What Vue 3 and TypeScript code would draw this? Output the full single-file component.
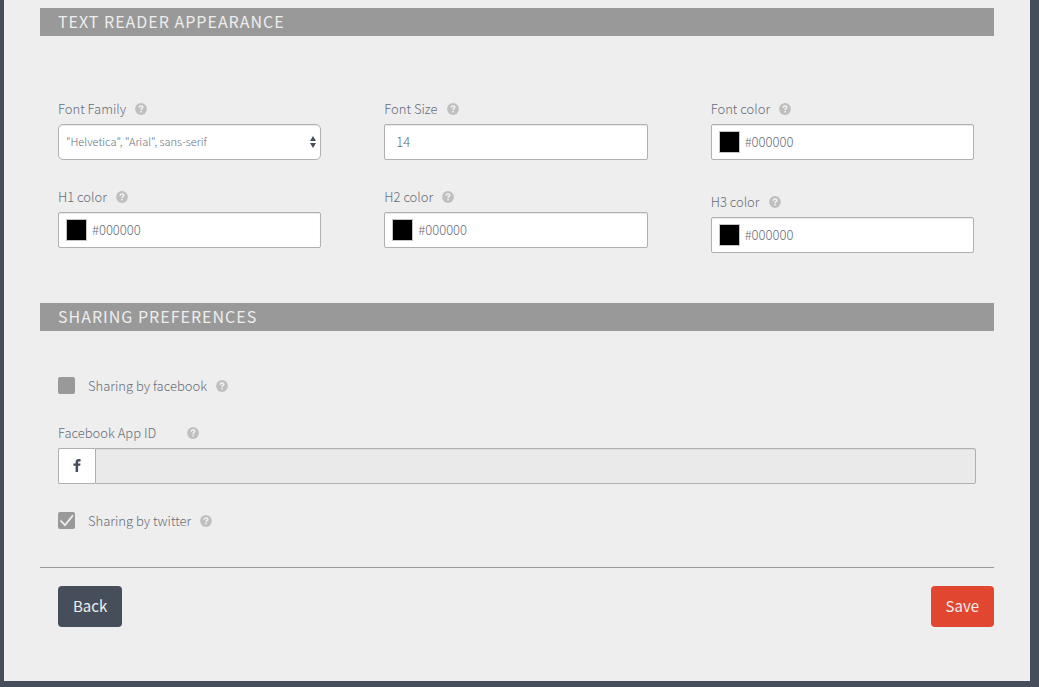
<script setup lang="ts">
import { ref } from 'vue'

type Kind = 'select' | 'number' | 'color'

interface Field {
  id: string
  label: string
  kind: Kind
  value: string
}

const columns = ref<Field[][]>([
  [
    { id: 'font-family', label: 'Font Family', kind: 'select', value: '"Helvetica", "Arial", sans-serif' },
    { id: 'h1-color', label: 'H1 color', kind: 'color', value: '#000000' },
  ],
  [
    { id: 'font-size', label: 'Font Size', kind: 'number', value: '14' },
    { id: 'h2-color', label: 'H2 color', kind: 'color', value: '#000000' },
  ],
  [
    { id: 'font-color', label: 'Font color', kind: 'color', value: '#000000' },
    { id: 'h3-color', label: 'H3 color', kind: 'color', value: '#000000' },
  ],
])

const families: string[] = ['"Helvetica", "Arial", sans-serif']
const byFacebook = ref(false)
const byTwitter = ref(true)
const appId = ref('')
</script>

<template>
  <svg class="defs" aria-hidden="true">
    <symbol id="help" viewBox="0 0 12 12">
      <circle cx="6" cy="6" r="5.9" fill="#bfbfbf" />
      <path d="M4.2 4.7C4.2 3.5 5 2.9 6.05 2.9C7.1 2.9 7.85 3.5 7.85 4.4C7.85 5.5 6.1 5.5 6.1 7" fill="none" stroke="#f2f2f2" stroke-width="1.5" />
      <rect x="5.3" y="7.8" width="1.6" height="1.6" fill="#f2f2f2" />
    </symbol>
  </svg>
  <main class="panel">
    <form @submit.prevent>
      <h2 class="bar">TEXT READER APPEARANCE</h2>
      <div class="columns">
        <div v-for="(column, i) in columns" :key="i" class="column">
          <div v-for="field in column" :key="field.id" class="field" :class="field.kind">
            <div class="caption">
              <label :for="field.id">{{ field.label }}</label>
              <svg class="help"><use href="#help" /></svg>
            </div>
            <div class="box">
              <template v-if="field.kind === 'select'">
                <select :id="field.id" v-model="field.value">
                  <option v-for="f in families" :key="f" :value="f">{{ f }}</option>
                </select>
                <svg class="arrows" viewBox="0 0 6 12"><path d="M3 0L6 5H0ZM0 7H6L3 12Z" fill="#474e5b" /></svg>
              </template>
              <template v-else>
                <input v-if="field.kind === 'color'" v-model="field.value" class="swatch" type="color" :aria-label="field.label + ' picker'" />
                <input :id="field.id" v-model="field.value" class="text" type="text" />
              </template>
            </div>
          </div>
        </div>
      </div>

      <h2 class="bar">SHARING PREFERENCES</h2>
      <div class="sharing">
        <div class="check">
          <label>
            <span class="tick"><input v-model="byFacebook" type="checkbox" /></span>
            Sharing by facebook
          </label>
          <svg class="help"><use href="#help" /></svg>
        </div>
        <div class="app">
          <div class="caption wide">
            <label for="app-id">Facebook App ID</label>
            <svg class="help"><use href="#help" /></svg>
          </div>
          <div class="group">
            <span class="addon">
              <svg viewBox="0 0 8 13"><path d="M7.6 0.2V2.4H6.3C5.3 2.4 5.1 2.9 5.1 3.6V4.5H7.5L7.2 6.7H5.1V13H2.6V6.7H0.4V4.5H2.6V3.3C2.6 1.1 3.9 0 5.8 0C6.7 0 7.4 0.1 7.6 0.2Z" fill="#474e5b" /></svg>
            </span>
            <input id="app-id" v-model="appId" type="text" :disabled="!byFacebook" />
          </div>
        </div>
        <div class="check">
          <label>
            <span class="tick">
              <input v-model="byTwitter" type="checkbox" />
              <svg v-if="byTwitter" viewBox="0 0 17 17"><path d="M2.5 8.5L7 13.2L15 3.2" fill="none" stroke="#f2f2f2" stroke-width="1.8" /></svg>
            </span>
            Sharing by twitter
          </label>
          <svg class="help"><use href="#help" /></svg>
        </div>
      </div>

      <div class="actions">
        <button class="back" type="button">Back</button>
        <button class="save" type="submit">Save</button>
      </div>
    </form>
  </main>
</template>

<style>
body {
  margin: 0;
  background: #474e5b;
}
</style>

<style scoped>
.defs {
  display: none;
}
.panel {
  margin: 0 9px 6px 4px;
  padding: 8px 36px 54px;
  background: #eeeeee;
  color: #666d79;
  font: 300 13px/20px "Noto Sans CJK SC", "Open Sans", sans-serif;
}
input,
select,
button {
  box-sizing: border-box;
  margin: 0;
  font: inherit;
  color: inherit;
}
.bar {
  margin: 0;
  padding: 0 18px 2px;
  background: #999999;
  color: #eeeeee;
  font-size: 16px;
  font-weight: 400;
  line-height: 26px;
  letter-spacing: 1px;
}
.columns {
  display: grid;
  grid-template-columns: repeat(3, 1fr);
  gap: 63px;
  padding: 63px 20px 45px 18px;
}
.field {
  margin-bottom: 27px;
}
.field.color {
  margin-bottom: 32px;
}
.field:last-child {
  margin-bottom: 5px;
}
.caption {
  display: flex;
  align-items: center;
  gap: 9px;
  height: 20px;
  margin-bottom: 5px;
}
.caption.wide {
  gap: 31px;
}
.help {
  display: block;
  width: 12px;
  height: 12px;
}
.box {
  box-sizing: border-box;
  display: flex;
  align-items: center;
  position: relative;
  height: 36px;
  border: 1px solid #b0b0b0;
  border-radius: 2px;
  background: #ffffff;
  box-shadow: inset 0 1px 1px #e9e9e9;
}
.select .box {
  border-radius: 5px;
}
select {
  width: 100%;
  height: 34px;
  padding: 0 20px 2px 7px;
  border: 0;
  background: transparent;
  appearance: none;
  font-size: 11px;
}
.arrows {
  position: absolute;
  right: 4px;
  top: 11px;
  width: 6px;
  height: 12px;
  pointer-events: none;
}
.text {
  flex: 1;
  min-width: 0;
  height: 34px;
  padding: 0 11px 2px;
  border: 0;
  background: transparent;
}
.swatch {
  width: 21px;
  height: 22px;
  margin-left: 7px;
  padding: 0;
  border: 1px solid #c4c4c4;
  background: none;
  appearance: none;
}
.swatch::-webkit-color-swatch-wrapper {
  padding: 0;
}
.swatch::-webkit-color-swatch {
  border: 0;
}
.color .text {
  padding-left: 5px;
}
.sharing {
  padding: 45px 18px 36px;
}
.check {
  display: flex;
  align-items: center;
  gap: 9px;
  height: 20px;
}
.check label {
  display: flex;
  align-items: center;
  gap: 13px;
}
.tick {
  display: grid;
  width: 17px;
  height: 17px;
  margin-bottom: 2px;
}
.tick > * {
  grid-area: 1 / 1;
  width: 17px;
  height: 17px;
}
.tick input {
  border-radius: 2px;
  background: #999999;
  appearance: none;
}
.tick svg {
  pointer-events: none;
}
.app {
  padding: 27px 0;
}
.group {
  display: flex;
  height: 36px;
}
.addon {
  box-sizing: border-box;
  display: grid;
  place-items: center;
  width: 37px;
  padding-bottom: 2px;
  border: 1px solid #b0b0b0;
  border-right: 0;
  border-radius: 2px 0 0 2px;
  background: #ffffff;
}
.addon svg {
  width: 8px;
  height: 13px;
}
.group input {
  flex: 1;
  min-width: 0;
  padding: 0 11px;
  border: 1px solid #b0b0b0;
  border-radius: 0 2px 2px 0;
  background: #eaeaea;
  box-shadow: inset 0 1px 1px #dddddd;
}
.actions {
  display: flex;
  justify-content: space-between;
  padding: 18px 0 0 18px;
  border-top: 1px solid #999999;
}
.actions button {
  height: 41px;
  padding: 0 15px 2px;
  border: 0;
  border-radius: 4px;
  color: #eeeeee;
  font-size: 15px;
  font-weight: 400;
}
.actions .back {
  background: #474e5b;
}
.actions .save {
  background: #e04630;
}
</style>
